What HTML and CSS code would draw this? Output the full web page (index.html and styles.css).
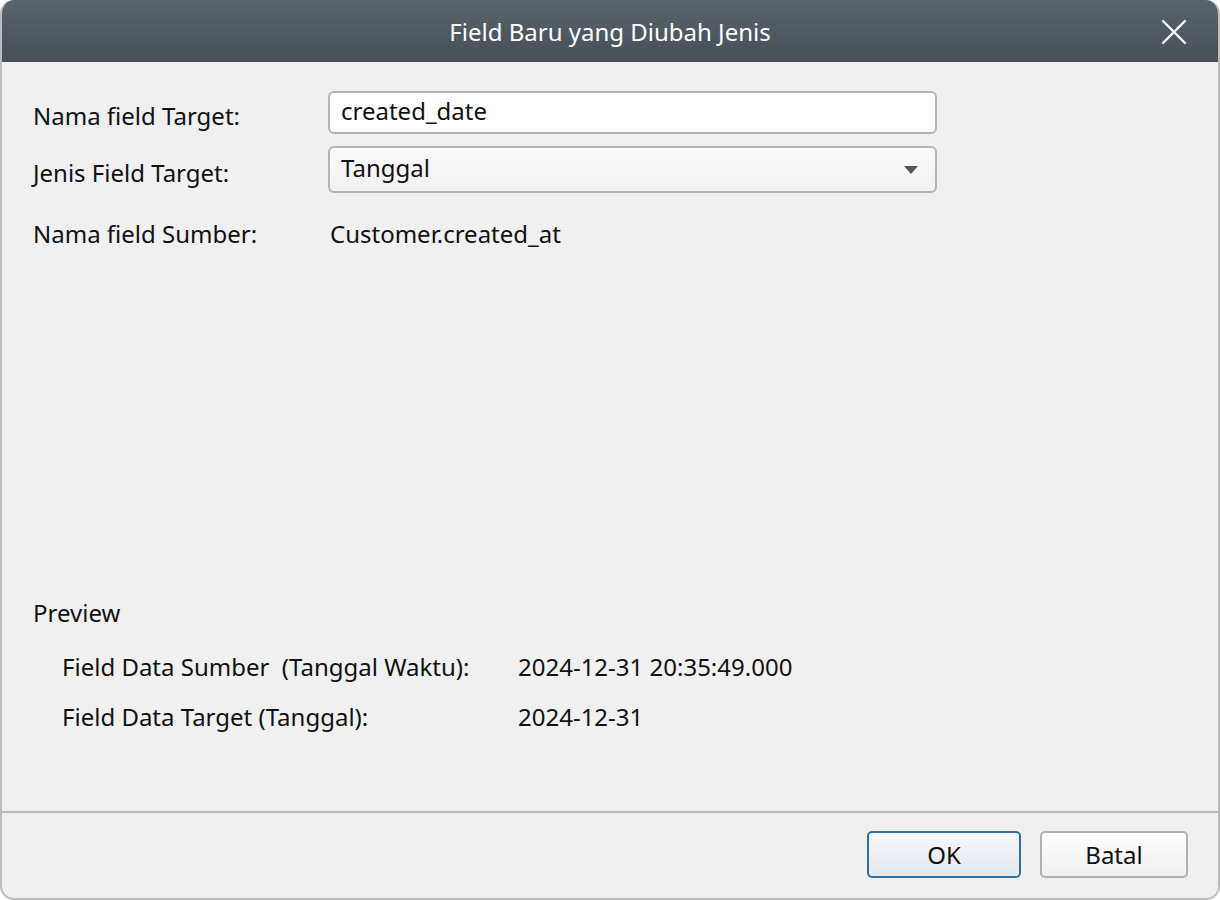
FILE: index.html
```html
<!DOCTYPE html>
<html lang="id">

<head>
    <meta charset="UTF-8">
    <title>Field Baru yang Diubah Jenis</title>
    <link rel="stylesheet" href="styles.css">
</head>

<body>
    <div class="dialog">
        <div class="titlebar">
            <span class="title">Field Baru yang Diubah Jenis</span>
            <span class="close">
                <svg width="26" height="26" viewBox="0 0 26 26">
                    <path d="M2 2L24 24M24 2L2 24" stroke="#fff" stroke-width="2.4" stroke-linecap="round" />
                </svg>
            </span>
        </div>

        <div class="content">
            <div class="form">
                <label class="row-label">Nama field Target:</label>
                <div class="input">created_date</div>

                <label class="row-label">Jenis Field Target:</label>
                <div class="select">
                    <span>Tanggal</span>
                    <svg width="14" height="8" viewBox="0 0 14 8">
                        <path d="M0 0H14L7 8Z" fill="#555" />
                    </svg>
                </div>

                <label class="row-label text-row">Nama field Sumber:</label>
                <div class="plain text-row">Customer.created_at</div>
            </div>

            <div class="preview">
                <div class="preview-title">Preview</div>
                <div class="preview-rows">
                    <span>Field Data Sumber&nbsp; (Tanggal Waktu):</span>
                    <span>2024-12-31 20:35:49.000</span>
                    <span>Field Data Target (Tanggal):</span>
                    <span>2024-12-31</span>
                </div>
            </div>
        </div>

        <div class="footer">
            <button class="btn primary">OK</button>
            <button class="btn">Batal</button>
        </div>
    </div>
</body>

</html>
```

FILE: styles.css
```css
html,
body {
    margin: 0;
    padding: 0;
    background: #fff;
}

body {
    font-family: "Noto Sans", "Open Sans", sans-serif;
    font-size: 24px;
    color: #111;
}

.dialog {
    width: 1220px;
    height: 900px;
    box-sizing: border-box;
    display: flex;
    flex-direction: column;
    background: #f0f0f0;
    border: 2px solid #bdbdbd;
    border-top: none;
    border-radius: 14px;
    overflow: hidden;
}

.titlebar {
    height: 62px;
    flex: none;
    margin: 0 -2px;
    display: flex;
    align-items: center;
    justify-content: center;
    position: relative;
    background: linear-gradient(#59646d, #474f57);
    color: #fff;
}

.titlebar .close {
    position: absolute;
    right: 33px;
    top: 19px;
    width: 26px;
    height: 26px;
}

.content {
    flex: 1;
    display: flex;
    flex-direction: column;
    justify-content: space-between;
    padding: 29px 31px 78px;
}

.form {
    display: grid;
    grid-template-columns: 295px 609px;
    row-gap: 12px;
    align-items: center;
}

.row-label {
    padding-top: 6px;
}

.row-label.text-row,
.plain.text-row {
    padding-top: 12px;
}

.plain {
    padding-left: 2px;
}

.input,
.select {
    box-sizing: border-box;
    border: 2px solid #b4b4b4;
    border-radius: 6px;
    padding: 0 11px;
    display: flex;
    align-items: center;
}

.input {
    height: 43px;
    background: #fff;
    padding-bottom: 5px;
}

.select {
    height: 47px;
    justify-content: space-between;
    padding-right: 17px;
    background: linear-gradient(#fbfbfb, #f1f1f1);
}

.select span {
    padding-bottom: 5px;
}

.preview-title {
    margin-bottom: 21px;
}

.preview-rows {
    display: grid;
    grid-template-columns: 456px auto;
    row-gap: 17px;
    padding-left: 29px;
}

.footer {
    flex: none;
    height: 87px;
    box-sizing: border-box;
    border-top: 2px solid #b9b9b9;
    display: flex;
    justify-content: flex-end;
    align-items: flex-start;
    gap: 19px;
    padding: 18px 30px 0 0;
}

.btn {
    font: inherit;
    color: #111;
    height: 47px;
    width: 148px;
    border: 2px solid #b0b0b0;
    border-radius: 5px;
    background: linear-gradient(#fdfdfd, #f0f0f0);
    padding: 0;
}

.btn.primary {
    width: 154px;
    border-color: #2f6f9e;
    background: linear-gradient(#f4f7fa, #e3e9ef);
}
```
